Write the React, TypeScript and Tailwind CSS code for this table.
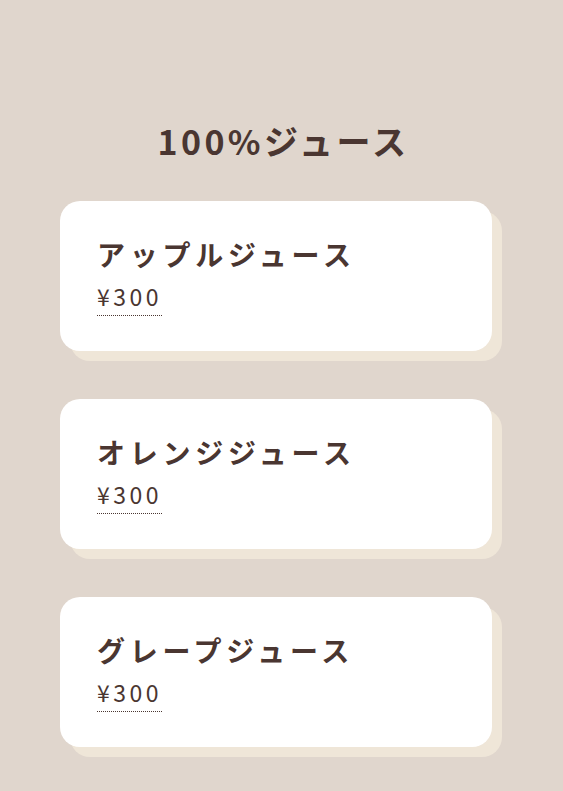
import React from "react";

const items = ["アップルジュース", "オレンジジュース", "グレープジュース"];

export default function App() {
  return (
    <div
      className="min-h-[791px] w-full bg-[#e0d6cd] text-[#4a3631] flex flex-col items-center pt-[117px]"
      style={{ fontFamily: '"Noto Sans CJK JP", "Noto Sans", sans-serif' }}
    >
      <h1 className="text-[34px] font-bold tracking-[0.1em] leading-[48px] ml-[4px]">100%ジュース</h1>
      <div className="flex flex-col gap-[48px] mt-[36px] mr-[11px]">
        {items.map((name) => (
          <div
            key={name}
            className="w-[432px] h-[150px] bg-white rounded-[20px] shadow-[10px_10px_0_#efe6d8] pl-[37px] pt-[33px]"
          >
            <div className="text-[28px] font-bold tracking-[0.17em] leading-[40px]">{name}</div>
            <div className="mt-[7px]">
              <span className="text-[23px] font-normal tracking-[0.15em] leading-[30px] pb-[4px] border-b border-dotted border-[#4a3631] inline-block">
                ¥300
              </span>
            </div>
          </div>
        ))}
      </div>
    </div>
  );
}
